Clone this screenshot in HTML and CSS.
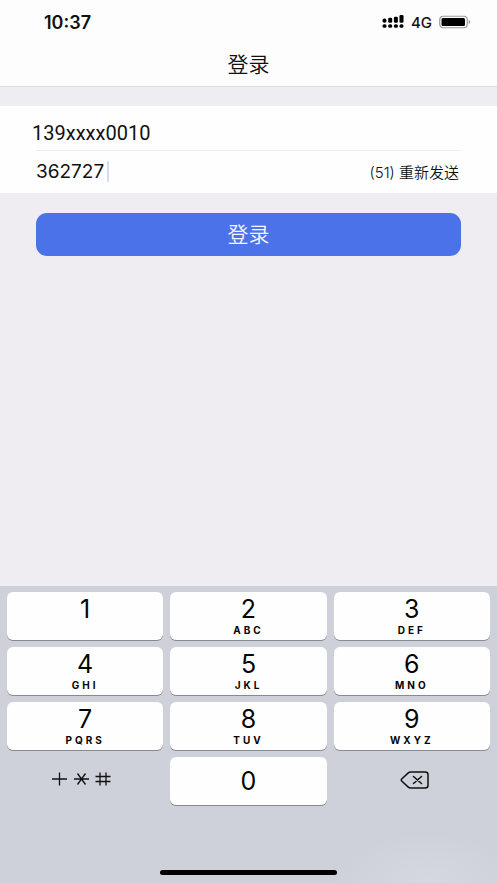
FILE: index.html
```html
<!DOCTYPE html>
<html lang="zh-CN">
<head>
<meta charset="utf-8">
<meta name="viewport" content="width=device-width, initial-scale=1">
<title>登录</title>
<link rel="stylesheet" href="styles.css">
</head>
<body>
<header class="header">
  <div class="status">
    <span class="time">10:37</span>
    <div class="indicators">
      <svg class="signal" width="22" height="14" viewBox="0 0 22 14" aria-hidden="true">
        <rect x="0.5" y="3.500" width="4" height="4.300" rx="1.8"/><rect x="6.200" y="2.800" width="4" height="5" rx="1.3"/><rect x="11.900" y="1.800" width="4" height="6" rx="1.3"/><rect x="17.500" y="0" width="4" height="7.800" rx="1.3"/>
        <rect x="0.5" y="9.200" width="4" height="3.600" rx="1.6"/><rect x="6.200" y="9.200" width="4" height="3.600" rx="1.6"/><rect x="11.900" y="9.200" width="4" height="3.600" rx="1.6"/><rect x="17.500" y="9.200" width="4" height="3.600" rx="1.6"/>
      </svg>
      <span class="network">4G</span>
      <svg width="32" height="14" viewBox="0 0 32 14" aria-hidden="true">
        <rect x="0.75" y="1.25" width="27.5" height="11.5" rx="3.5" fill="none" stroke="#9a9a9a" stroke-width="1.2"/>
        <rect x="2.5" y="3" width="23.5" height="8" rx="1.5"/>
        <path d="M29.800 5v4q1.300-.6 1.300-2t-1.300-2" fill="#8d8d8d"/>
      </svg>
    </div>
  </div>
  <h1 class="title">登录</h1>
</header>
<main class="main">
  <form class="form">
    <div class="fields">
      <div class="row">
        <input class="phone" type="tel" value="139xxxx0010" aria-label="手机号">
      </div>
      <div class="row">
        <input class="code" type="text" inputmode="numeric" value="362727" aria-label="验证码">
        <span class="caret"></span>
        <button class="resend" type="button">(51) 重新发送</button>
      </div>
    </div>
    <button class="submit" type="button">登录</button>
  </form>
</main>
<section class="keyboard" aria-label="数字键盘">
  <div class="keys">
    <button class="key"><span class="digit">1</span></button>
    <button class="key"><span class="digit">2</span><span class="letters">ABC</span></button>
    <button class="key"><span class="digit">3</span><span class="letters">DEF</span></button>
    <button class="key"><span class="digit">4</span><span class="letters">GHI</span></button>
    <button class="key"><span class="digit">5</span><span class="letters">JKL</span></button>
    <button class="key"><span class="digit">6</span><span class="letters">MNO</span></button>
    <button class="key"><span class="digit">7</span><span class="letters">PQRS</span></button>
    <button class="key"><span class="digit">8</span><span class="letters">TUV</span></button>
    <button class="key"><span class="digit">9</span><span class="letters">WXYZ</span></button>
    <button class="key plain symbols" aria-label="符号">
      <svg width="60" height="16" viewBox="0 0 60 16" fill="none" stroke="#111" stroke-width="1.3" aria-hidden="true">
        <path d="M1 8h15M8.500 1.500v13M23 8h15M26.500 2.500l8 11M34.500 2.500l-8 11M44.500 5.500h15M44.500 10.500h15M49 1.500v13M55 1.500v13"/>
      </svg>
    </button>
    <button class="key zero"><span class="digit">0</span></button>
    <button class="key plain delete" aria-label="删除">
      <svg width="30" height="18" viewBox="0 0 30 18" fill="none" stroke="#111" stroke-width="1.5" stroke-linejoin="round" aria-hidden="true">
        <path d="M10.500 1H25q3 0 3 2.500v11Q28 17 25 17H10.500Q9.300 17 8.300 16.100L1.700 10Q.8 9 1.700 8L8.300 1.900Q9.300 1 10.500 1Z"/>
        <path d="M13.500 5.500l8 7M21.500 5.500l-8 7" stroke-linecap="round"/>
      </svg>
    </button>
  </div>
  <div class="home"></div>
</section>
</body>
</html>
```

FILE: styles.css
```css
* {
  box-sizing: border-box;
}

body {
  margin: 0;
  min-height: 100vh;
  display: flex;
  flex-direction: column;
  background: #efecf2;
  color: #111;
  font-family: Inter, "Noto Sans CJK SC", sans-serif;
}

button,
input {
  margin: 0;
  padding: 0;
  border: 0;
  background: none;
  color: inherit;
  font: inherit;
  outline: 0;
}

.header {
  background: #fdfdfd;
  border-bottom: 1px solid #dcdbdf;
}

.status {
  display: flex;
  align-items: center;
  justify-content: space-between;
  height: 44px;
  padding: 0 26px 0 44px;
}

.time {
  font-size: 18px;
  font-weight: 600;
}

.indicators {
  display: flex;
  align-items: center;
  gap: 7px;
}

.network {
  font-size: 15px;
  font-weight: 500;
}

.title {
  margin: 0;
  height: 42px;
  font-size: 21px;
  font-weight: 350;
  line-height: 42px;
  text-align: center;
}

.main {
  flex: 1;
}

.fields {
  margin-top: 19px;
  padding: 0 36px;
  background: #fefefe;
}

.row {
  display: flex;
  align-items: center;
  height: 42px;
  padding-bottom: 2px;
}

.row:first-child {
  height: 45px;
  padding: 10px 0 0;
  border-bottom: 1px solid #ececef;
}

.phone {
  flex: 1;
  margin-left: -4px;
  font-family: Roboto, sans-serif;
  font-size: 20px;
}

.code {
  width: 71px;
  font-size: 19px;
}

.caret {
  width: 2px;
  height: 21px;
  background: #d3dcf0;
}

.resend {
  margin-left: auto;
  padding-right: 2px;
  font-size: 15px;
  font-weight: 350;
}

.submit {
  display: block;
  width: calc(100% - 72px);
  height: 43px;
  margin: 20px 36px;
  border-radius: 11px;
  background: #4b72e8;
  color: #f1f6ff;
  font-size: 21px;
  font-weight: 350;
  line-height: 43px;
}

.keyboard {
  padding: 6px 7px 8px;
  background: radial-gradient(ellipse 90px 50px at 86% 100%, #d5d8e0, transparent) #ced1da;
}

.keys {
  display: grid;
  grid-template-columns: repeat(3, 1fr);
  grid-auto-rows: 48px;
  gap: 7px;
}

.key {
  display: flex;
  flex-direction: column;
  align-items: center;
  justify-content: flex-start;
  padding-top: 2px;
  border-radius: 6px;
  background: #fefefe;
  box-shadow: 0 1px 0 #898a8f;
  color: #050505;
}

.digit {
  font-size: 25px;
  line-height: 30px;
}

.letters {
  font-size: 10px;
  font-weight: 700;
  line-height: 12px;
  letter-spacing: 3px;
}

.zero,
.plain {
  justify-content: center;
  padding: 0;
}

.plain {
  background: none;
  box-shadow: none;
}

.symbols {
  padding: 0 8px 4px 0;
}

.delete {
  padding: 0 0 2px 6px;
}

.home {
  width: 177px;
  height: 5px;
  margin: 65px auto 0;
  border-radius: 3px;
  background: #000;
}
```
